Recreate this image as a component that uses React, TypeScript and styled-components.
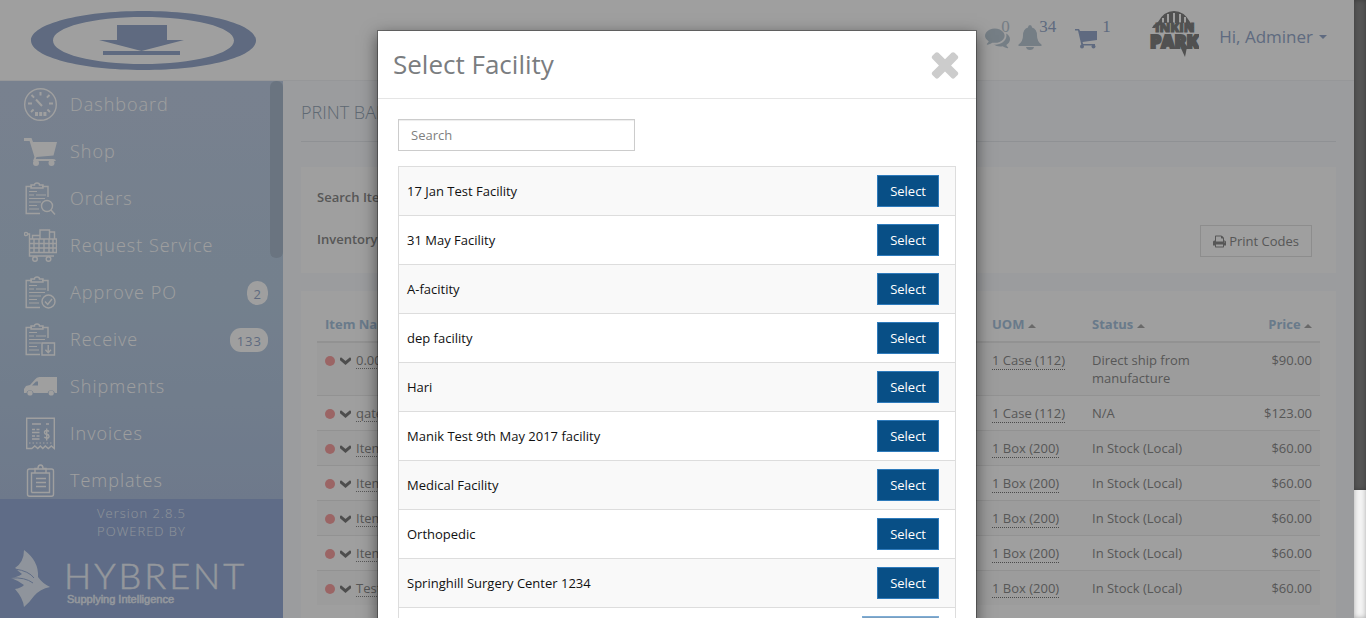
import React from "react";
import styled, { createGlobalStyle } from "styled-components";

const GlobalStyle = createGlobalStyle`
  *, *::before, *::after { box-sizing: border-box; }
  html, body { margin: 0; padding: 0; }
  body {
    font-family: "Open Sans", "Noto Sans", sans-serif;
    font-size: 13px;
    line-height: 18px;
    color: #111;
  }
  button, input { font: inherit; letter-spacing: inherit; }
  a { color: inherit; text-decoration: none; }
`;

/* ---------- page frame ---------- */

const Screen = styled.div`
  position: relative;
  display: grid;
  grid-template-columns: minmax(0, 1fr) 12px;
  height: 100vh;
  overflow: hidden;
  background: #f8fafd;
`;

const Page = styled.div`
  display: flex;
  flex-direction: column;
  min-height: 0;
  overflow: hidden;
  color: #8c8c8c;
`;

const PageScroll = styled.div`
  background: #f3f3f3;
  box-shadow: inset 0 0 5px rgba(0, 0, 0, 0.3);
  z-index: 3;
`;

const PageThumb = styled.div`
  height: 490px;
  background: #555;
  box-shadow: inset 0 0 5px rgba(0, 0, 0, 0.3);
`;

/* ---------- top bar ---------- */

const TopBar = styled.header`
  display: flex;
  flex: none;
  align-items: flex-start;
  justify-content: space-between;
  height: 81px;
  padding: 10px 27px 0 30px;
  background: #fff;
  border-bottom: 1px solid #f0f2f5;
`;

const TopActions = styled.div`
  display: flex;
  align-items: flex-start;
  color: #98abcd;
`;

const Counter = styled.a<{ $muted?: boolean; $gap: number }>`
  position: relative;
  display: block;
  margin: 15px ${(p) => p.$gap}px 0 0;
  color: ${(p) => (p.$muted ? "#bccad6" : "#98abcd")};
  svg { display: block; }
`;

const Count = styled.span<{ $left: number; $muted?: boolean }>`
  position: absolute;
  top: -8px;
  left: ${(p) => p.$left}px;
  font-family: "Liberation Serif", serif;
  font-size: 17px;
  line-height: 20px;
  color: ${(p) => (p.$muted ? "#bccad6" : "#98abcd")};
`;

const BandLogo = styled.svg`
  display: block;
  margin-right: 20px;
`;

const UserButton = styled.button`
  display: flex;
  align-items: center;
  gap: 6px;
  margin-top: 14px;
  padding: 0;
  border: 0;
  background: none;
  color: #98abcd;
  font-size: 17px;
  line-height: 26px;
`;

const Caret = styled.span<{ $up?: boolean; $color?: string }>`
  display: inline-block;
  width: 0;
  height: 0;
  border-left: 4px solid transparent;
  border-right: 4px solid transparent;
  border-top: ${(p) => (p.$up ? "0" : "4px solid currentColor")};
  border-bottom: ${(p) => (p.$up ? "4px solid currentColor" : "0")};
  color: ${(p) => p.$color ?? "inherit"};
  vertical-align: middle;
`;

/* ---------- side bar ---------- */

const Body = styled.div`
  display: flex;
  flex: 1;
  min-height: 0;
`;

const SideBar = styled.aside`
  display: flex;
  flex: none;
  flex-direction: column;
  width: 283px;
`;

const Nav = styled.nav`
  position: relative;
  flex: 1;
  min-height: 0;
  overflow: hidden;
  background: linear-gradient(#c1cfe5, #bacee3 50%, #b1c3df);
`;

const NavThumb = styled.div`
  position: absolute;
  top: 0;
  right: 0;
  width: 13px;
  height: 177px;
  border-radius: 6px;
  background: #aabbce;
`;

const NavList = styled.ul`
  margin: 0;
  padding: 0;
  list-style: none;
`;

const NavLink = styled.a`
  display: flex;
  align-items: center;
  gap: 13px;
  height: 47px;
  padding: 0 15px 2px 24px;
  color: #fff;
  font-size: 18px;
  letter-spacing: 1px;
`;

const NavIcon = styled.svg`
  flex: none;
  width: 33px;
  height: 33px;
  margin-top: 2px;
  fill: none;
  stroke: currentColor;
  stroke-width: 1.4;
`;

const NavLabel = styled.span`
  flex: 1;
  font-weight: 300;
`;

const Badge = styled.span`
  margin-top: 2px;
  padding: 4px 6px 2px 7px;
  border-radius: 11px;
  background: #fff;
  color: #98abcd;
  font-size: 13px;
  line-height: 18px;
`;

const SideFooter = styled.footer`
  flex: none;
  height: 119px;
  padding-top: 5px;
  background: #98aed8;
  color: #e4ebf7;
  font-weight: 300;
  text-align: center;
  letter-spacing: 1px;
`;

const FooterLogo = styled.svg`
  display: block;
  margin: 10px 0 0 10px;
`;

/* ---------- content ---------- */

const Content = styled.main`
  flex: 1;
  min-width: 0;
  padding: 0 18px;
  overflow: hidden;
`;

const PageTitle = styled.h1`
  margin: 0 0 25px;
  padding: 19px 0 16px;
  border-bottom: 1px solid #e6e9ed;
  color: #98a8b8;
  font-size: 18px;
  font-weight: 300;
  line-height: 25px;
`;

const Panel = styled.section`
  margin-bottom: 18px;
  padding: 16px;
  background: #fff;
`;

const FilterPanel = styled(Panel)`
  height: 106px;
  padding: 21px 24px 16px 16px;
`;

const FilterRow = styled.div`
  display: flex;
  align-items: flex-start;
  justify-content: space-between;
  height: 18px;
  margin-bottom: 24px;
  font-weight: 600;
`;

const PrintButton = styled.button`
  display: flex;
  align-items: center;
  gap: 3px;
  height: 32px;
  margin-top: -5px;
  padding: 0 12px;
  border: 1px solid #e2e2e2;
  background: #fff;
  color: #8c8c8c;
  font-weight: 400;
`;

const ItemTable = styled.table`
  width: 100%;
  border-collapse: collapse;
  table-layout: fixed;
  th, td { padding: 8px; text-align: left; vertical-align: top; font-weight: 400; }
  th { color: #a9c4de; font-weight: 700; border-bottom: 2px solid #ebebeb; }
  td { border-top: 1px solid #ebebeb; }
  th:last-child, td:last-child { text-align: right; }
  tbody tr:nth-child(odd) { background: #fbfbfb; }
`;

const Col = styled.col<{ $width?: number }>`
  width: ${(p) => (p.$width ? `${p.$width}px` : "auto")};
`;

const ItemCell = styled.div`
  display: flex;
  align-items: center;
  gap: 5px;
  svg { margin-top: 2px; }
`;

const Dot = styled.span`
  width: 10px;
  height: 10px;
  margin-top: 2px;
  border-radius: 50%;
  background: #f8a2a2;
`;

const ItemLink = styled.a`
  text-decoration: underline dotted 1px;
  text-underline-offset: 3px;
`;

const UnitLink = styled.a`
  border-bottom: 1px dotted #777;
`;

/* ---------- modal ---------- */

const Backdrop = styled.div`
  position: absolute;
  inset: 0 12px 0 0;
  z-index: 2;
  padding: 30px 0;
  overflow-y: auto;
  scrollbar-width: none;
  background: rgba(0, 0, 0, 0.375);
`;

const Modal = styled.div`
  width: 600px;
  margin: 0 auto;
  border: 1px solid rgba(0, 0, 0, 0.3);
  background: #fff;
  background-clip: padding-box;
  box-shadow: 0 5px 15px rgba(0, 0, 0, 0.5);
`;

const ModalHeader = styled.header`
  display: flex;
  align-items: center;
  justify-content: space-between;
  height: 68px;
  padding: 0 11px 2px 15px;
  border-bottom: 1px solid #e5e5e5;
`;

const ModalTitle = styled.h2`
  margin: 0;
  color: #7a7d80;
  font-size: 26px;
  font-weight: 400;
  line-height: 36px;
`;

const CloseButton = styled.button`
  padding: 0;
  border: 0;
  background: none;
  color: #ccc;
  svg { display: block; }
`;

const ModalBody = styled.div`
  padding: 20px;
`;

const SearchInput = styled.input`
  display: block;
  width: 237px;
  height: 32px;
  margin-bottom: 15px;
  padding: 6px 12px;
  border: 1px solid #ccc;
  border-radius: 0;
  background: #fff;
  box-shadow: inset 0 1px 1px rgba(0, 0, 0, 0.075);
  &::placeholder { color: #808080; opacity: 1; }
`;

const FacilityTable = styled.table`
  width: 100%;
  border: 1px solid #ddd;
  border-collapse: collapse;
  td { padding: 8px; border-bottom: 1px solid #ddd; }
  td:last-child { padding-right: 16px; text-align: right; }
  tr:nth-child(odd) { background: #f9f9f9; }
`;

const SelectButton = styled.button`
  display: inline-block;
  height: 32px;
  padding: 0 12px;
  border: 1px solid #2e7bbc;
  background: #084f86;
  color: #fff;
  vertical-align: top;
  &:disabled { border-color: #7eadd6; background: #7b9fbf; }
`;

/* ---------- drawings ---------- */

const Clipboard = ({ children }: { children?: React.ReactNode }) => (
  <>
    <path d="M24 15V4.500H18M8 4.500H2.200V31.500H16" />
    <path d="M7 6V3h3.500q0-2 2.500-2t2.500 2H19v3z" />
    <path d="M5 9.500h8M5 13h5M12 13h10M5 16.500h16M5 20h12M5 23.500h8M5 27h10" strokeWidth="1.200" />
    {children}
  </>
);

const icons: Record<string, React.ReactNode> = {
  dashboard: (
    <>
      <circle cx="16.500" cy="16.500" r="15.800" />
      <path d="M16.500 4v3.500M4 15.500h4M25 15.500h4M7.500 7l2.600 2.600M25.500 7l-2.600 2.600M7 24l2.600-2.400M26 24l-2.600-2.400M12 11.500l6 6.500" strokeWidth="2" />
      <path d="M11 24h3v4h-3zM15.200 24h3v4h-3zM19.400 24h3v4h-3z" fill="currentColor" stroke="none" />
    </>
  ),
  shop: (
    <g fill="currentColor" stroke="none">
      <path d="M0 3h7.500l1.500 4h24l-3.500 13.500-17 1.500-.7 2h17q3 0 3 2H9l1.500-4L5.600 6H0z" />
      <circle cx="12" cy="28" r="3" />
      <circle cx="27.500" cy="28" r="3" />
    </g>
  ),
  orders: (
    <Clipboard>
      <circle cx="23" cy="24" r="5.500" />
      <path d="M27 28l4 4.500" />
    </Clipboard>
  ),
  request: (
    <>
      <circle cx="2" cy="5" r="1.600" />
      <path d="M3.600 5H5.500V27H30M5.500 10H32.500V23.500H5.500M5.500 14.500H32M5.500 19H32M10 10v13M15 10v13M20 10v13M25 10v13M29 10v13M8.500 10V6.500h7M16 10V1h9.500v9M25.500 3h5v7" />
      <circle cx="11" cy="30" r="2.300" />
      <circle cx="24.500" cy="30" r="2.300" />
    </>
  ),
  approve: (
    <Clipboard>
      <circle cx="24.500" cy="25.500" r="6.500" />
      <path d="M21 25.500l2.700 3 4.300-5.500" />
    </Clipboard>
  ),
  receive: (
    <Clipboard>
      <path d="M18 20h12.500v12H18zM24.200 22v7.500M21.400 26.700l2.800 3 2.800-3" />
    </Clipboard>
  ),
  shipments: (
    <g fill="currentColor" stroke="none">
      <path fillRule="evenodd" d="M15.500 7H33v16h-2.300a3.600 3.600 0 0 0-7 0H9.500a3.600 3.600 0 0 0-7 0H0v-4l2-3 4-1 5-5.500q1.500-2.500 4.500-2.500zM14 11.500h-2L8 15.500h6z" />
      <circle cx="6" cy="23" r="2.600" />
      <circle cx="27.200" cy="23" r="2.600" />
    </g>
  ),
  invoices: (
    <>
      <path d="M2.700 31.500V1.200h27.600v30.300l-3-2.500-3 2.500-3-2.500-2.500 2.500-2.500-2.500-2.500 2.500-3-2.500-3 2.500z" />
      <path d="M8 7h9M22 7h3M8 12.500h3M12.500 12.500h3M8 15.500h7.500M8 19h3M12.500 19h3M8 22h7.500" />
      <path d="M26 14.500q-1-1-2.500-1-2 0-2 1.800t2.200 2 2.300 2-2.200 1.700q-1.500 0-2.500-1M23.700 11.500v12" transform="translate(-1 0)" />
      <path d="M5 26h24" strokeDasharray="1.500 2" strokeWidth="1" />
    </>
  ),
  templates: (
    <>
      <rect x="3.500" y="5" width="26" height="27.300" rx="2" />
      <path d="M7.500 28.500V9h3M22.500 9h3v19.500h-18M11 9V4.500h3q0-3.500 2.500-3.500T19 4.500h3V9zM12 14.500h10M12 18.500h10M12 22.500h10" />
    </>
  ),
};

const navItems = [
  { icon: "dashboard", label: "Dashboard" },
  { icon: "shop", label: "Shop" },
  { icon: "orders", label: "Orders" },
  { icon: "request", label: "Request Service" },
  { icon: "approve", label: "Approve PO", badge: "2" },
  { icon: "receive", label: "Receive", badge: "133" },
  { icon: "shipments", label: "Shipments" },
  { icon: "invoices", label: "Invoices" },
  { icon: "templates", label: "Templates" },
];

const items = [
  { name: "0.001 Suture", unit: "1 Case (112)", status: "Direct ship from manufacture", price: "$90.00" },
  { name: "qatest", unit: "1 Case (112)", status: "N/A", price: "$123.00" },
  { name: "Item", unit: "1 Box (200)", status: "In Stock (Local)", price: "$60.00" },
  { name: "Item", unit: "1 Box (200)", status: "In Stock (Local)", price: "$60.00" },
  { name: "Item", unit: "1 Box (200)", status: "In Stock (Local)", price: "$60.00" },
  { name: "Item", unit: "1 Box (200)", status: "In Stock (Local)", price: "$60.00" },
  { name: "Test", unit: "1 Box (200)", status: "In Stock (Local)", price: "$60.00" },
];

const facilities = [
  "17 Jan Test Facility",
  "31 May Facility",
  "A-facitity",
  "dep facility",
  "Hari",
  "Manik Test 9th May 2017 facility",
  "Medical Facility",
  "Orthopedic",
  "Springhill Surgery Center 1234",
];

const CompanyLogo = () => (
  <svg width="227" height="60" viewBox="0 0 227 60" role="img" aria-label="Company">
    <g fill="#98abcd">
      <path fillRule="evenodd" d="M113.500 1C176 1 226 14 226 30.500S176 60 113.500 60 1 47 1 30.500 51 1 113.500 1zM113 7C63 7 23 17 23 30.500S63 54 113 54s91-10 91-23.500S163 7 113 7z" />
      <path d="M87 15h50v15h17l-42.500 11L69 30h18zM73 41h77v4H73z" />
    </g>
  </svg>
);

const ParkLogo = () => (
  <BandLogo width="50" height="48" viewBox="0 0 50 48" role="img" aria-label="Profile">
    <path d="M9 12Q15 1 25 1t16 11l4 6h-3l-3-5h-2v-6h-2v6h-3V4h-2v9h-4V3h-2v10h-4V4h-2v9h-3V8h-2v6l-7 4H3q2-4 6-6z" fill="#828282" />
    <g fill="#828282" stroke="#828282" fontFamily="Open Sans, sans-serif" fontWeight="800">
      <text x="6" y="22" fontSize="13" strokeWidth="1">INKIN</text>
      <text x="1" y="38" fontSize="18" strokeWidth="2">PARK</text>
    </g>
    <path d="M30 34l8 3-2 10z" fill="#828282" />
  </BandLogo>
);

const HybrentLogo = () => (
  <FooterLogo width="250" height="60" viewBox="0 0 250 60" role="img" aria-label="Hybrent">
    <path d="M14 0q15 11 14 27 4 6 12 10-10 2-16 9-5 7-10 11-1-9-9-18 6-1 9-4-7-5-13-7 7-1 11-4-4-3-7-6 9-6 9-18z" fill="#e6eefa" />
    <path d="M5 19q14 2 19 9M1 28q14-1 22 5" stroke="#98aed8" strokeWidth="1" fill="none" />
    <g fill="#eef3fb" stroke="#eef3fb" strokeWidth="0.500">
      <text x="54" y="39" fontFamily="Lato, sans-serif" fontSize="36" fontWeight="300" letterSpacing="3">HYBRENT</text>
      <text x="57" y="53" fontFamily="Liberation Sans, sans-serif" fontSize="11" fontWeight="400" letterSpacing="0">Supplying Intelligence</text>
    </g>
  </FooterLogo>
);

const CommentsIcon = () => (
  <svg width="25" height="25" viewBox="0 0 1792 1792" fill="currentColor">
    <path d="M1408 768q0 139-94 257t-256.500 186.500-353.500 68.500q-86 0-176-16-124 88-278 128-36 9-86 16h-3q-11 0-20.500-8t-11.500-21q-1-3-1-6.500t.5-6.500 2-6l2.500-5 3.500-5.500 4-5 4.500-5 4-4.500q5-6 23-25t26-29.500 22.500-29 25-38.500 20.500-44q-124-72-195-177t-71-224q0-139 94-257t256.500-186.500 353.500-68.500 353.500 68.500 256.500 186.500 94 257zm384 256q0 120-71 224.500t-195 176.500q10 24 20.500 44t25 38.500 22.500 29 26 29.500 23 25q1 1 4 4.500t4.500 5 4 5 3.500 5.500l2.500 5 2 6 .5 6.500-1 6.500q-3 14-13 22t-22 7q-50-7-86-16-154-40-278-128-90 16-176 16-271 0-472-132 58 4 88 4 161 0 309-45t264-129q125-92 192-212t67-254q0-77-23-152 129 71 204 178t75 230z" />
  </svg>
);

const BellIcon = () => (
  <svg width="24" height="25" viewBox="0 0 24 25" fill="currentColor">
    <path d="M12 0q2 0 2 2.500 5 1.500 5 8 0 6 4.500 9v1.500H.500v-1.500q4.500-3 4.500-9 0-6.500 5-8Q10 0 12 0zM8 22h8q-.5 3-4 3t-4-3z" />
  </svg>
);

const CartIcon = () => (
  <svg width="22" height="25" viewBox="0 0 22 25" fill="currentColor">
    <path d="M0 4h4l1 2h17v9l-14.500 2 .7 2H20v1.500H6.500L3 5.500H0z" />
    <circle cx="7" cy="21.500" r="2" />
    <circle cx="18.500" cy="21.500" r="2" />
  </svg>
);

const PrintIcon = () => (
  <svg width="13" height="13" viewBox="64 64 1664 1664" fill="currentColor">
    <path d="M448 1536h896v-256h-896v256zm0-640h896v-384h-160q-40 0-68-28t-28-68v-160h-640v640zm1152 64q0-26-19-45t-45-19-45 19-19 45 19 45 45 19 45-19 19-45zm128 0v416q0 13-9.500 22.500t-22.500 9.500h-224v160q0 40-28 68t-68 28h-960q-40 0-68-28t-28-68v-160h-224q-13 0-22.500-9.500t-9.500-22.500v-416q0-79 56.500-135.500t135.500-56.500h64v-544q0-40 28-68t68-28h672q40 0 88 20t76 48l152 152q28 28 48 76t20 88v256h64q79 0 135.500 56.500t56.500 135.500z" />
  </svg>
);

const ChevronIcon = () => (
  <svg width="11" height="8" viewBox="0 0 11 8" fill="none" stroke="#7c7c7c" strokeWidth="3">
    <path d="M0 1.300l5.500 4.700L11 1.300" />
  </svg>
);

const CloseIcon = () => (
  <svg width="40" height="40" viewBox="0 0 1792 1792" fill="currentColor">
    <path d="M1490 1322q0 40-28 68l-136 136q-28 28-68 28t-68-28l-294-294-294 294q-28 28-68 28t-68-28l-136-136q-28-28-28-68t28-68l294-294-294-294q-28-28-28-68t28-68l136-136q28-28 68-28t68 28l294 294 294-294q28-28 68-28t68 28l136 136q28 28 28 68t-28 68l-294 294 294 294q28 28 28 68z" />
  </svg>
);

export default function App() {
  return (
    <>
      <GlobalStyle />
      <Screen>
        <Page>
          <TopBar>
            <a href="#home"><CompanyLogo /></a>
            <TopActions>
              <Counter href="#messages" $muted $gap={8}>
                <CommentsIcon />
                <Count $left={16} $muted>0</Count>
              </Counter>
              <Counter href="#alerts" $muted $gap={33}>
                <BellIcon />
                <Count $left={21}>34</Count>
              </Counter>
              <Counter href="#cart" $gap={52}>
                <CartIcon />
                <Count $left={27}>1</Count>
              </Counter>
              <ParkLogo />
              <UserButton type="button">Hi, Adminer <Caret /></UserButton>
            </TopActions>
          </TopBar>
          <Body>
            <SideBar>
              <Nav>
                <NavList>
                  {navItems.map((item) => (
                    <li key={item.label}>
                      <NavLink href={`#${item.icon}`}>
                        <NavIcon viewBox="0 0 33 33">{icons[item.icon]}</NavIcon>
                        <NavLabel>{item.label}</NavLabel>
                        {item.badge && <Badge>{item.badge}</Badge>}
                      </NavLink>
                    </li>
                  ))}
                </NavList>
                <NavThumb />
              </Nav>
              <SideFooter>
                <div>Version 2.8.5</div>
                <div>POWERED BY</div>
                <HybrentLogo />
              </SideFooter>
            </SideBar>
            <Content>
              <PageTitle>PRINT BARCODES</PageTitle>
              <FilterPanel>
                <FilterRow>Search Item</FilterRow>
                <FilterRow>
                  Inventory
                  <PrintButton type="button"><PrintIcon />Print Codes</PrintButton>
                </FilterRow>
              </FilterPanel>
              <Panel>
                <ItemTable>
                  <colgroup>
                    <Col />
                    <Col $width={100} />
                    <Col $width={136} />
                    <Col $width={100} />
                  </colgroup>
                  <thead>
                    <tr>
                      <th>Item Name</th>
                      <th>UOM <Caret $up $color="#a8a8a8" /></th>
                      <th>Status <Caret $up $color="#a8a8a8" /></th>
                      <th>Price <Caret $up $color="#a8a8a8" /></th>
                    </tr>
                  </thead>
                  <tbody>
                    {items.map((item, i) => (
                      <tr key={i}>
                        <td>
                          <ItemCell>
                            <Dot />
                            <ChevronIcon />
                            <ItemLink href="#item">{item.name}</ItemLink>
                          </ItemCell>
                        </td>
                        <td><UnitLink href="#unit">{item.unit}</UnitLink></td>
                        <td>{item.status}</td>
                        <td>{item.price}</td>
                      </tr>
                    ))}
                  </tbody>
                </ItemTable>
              </Panel>
            </Content>
          </Body>
        </Page>
        <PageScroll><PageThumb /></PageScroll>
        <Backdrop>
          <Modal role="dialog" aria-labelledby="facility-title">
            <ModalHeader>
              <ModalTitle id="facility-title">Select Facility</ModalTitle>
              <CloseButton type="button" aria-label="Close"><CloseIcon /></CloseButton>
            </ModalHeader>
            <ModalBody>
              <SearchInput type="text" placeholder="Search" aria-label="Search" />
              <FacilityTable>
                <tbody>
                  {facilities.map((name) => (
                    <tr key={name}>
                      <td>{name}</td>
                      <td><SelectButton type="button">Select</SelectButton></td>
                    </tr>
                  ))}
                  <tr>
                    <td>Test Facility</td>
                    <td><SelectButton type="button" disabled>Selected</SelectButton></td>
                  </tr>
                </tbody>
              </FacilityTable>
            </ModalBody>
          </Modal>
        </Backdrop>
      </Screen>
    </>
  );
}
